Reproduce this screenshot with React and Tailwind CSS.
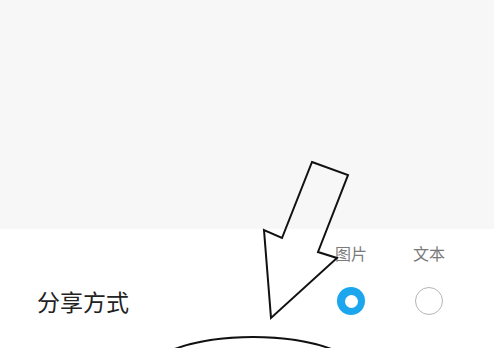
import React from "react";

const font = { fontFamily: '"Noto Sans CJK SC", "Noto Sans", sans-serif' };

const Option = ({ label, checked }) => (
  <div className="flex w-[32px] flex-col items-center gap-[26px]">
    <span className="text-[16px] leading-[16px] text-[#7a7a7a]">{label}</span>
    {checked ? (
      <span className="flex h-[28px] w-[28px] items-center justify-center rounded-full bg-[#1ba6ee]">
        <span className="h-[13px] w-[13px] rounded-full bg-white" />
      </span>
    ) : (
      <span className="h-[28px] w-[28px] rounded-full border border-[#b5b5b5] bg-white" />
    )}
  </div>
);

export default function App() {
  return (
    <div className="relative h-[348px] w-[494px] overflow-hidden bg-white" style={font}>
      <div className="h-[229px] bg-[#f7f7f7]" />
      <div className="flex justify-between pl-[37px] pr-[49px]">
        <div className="pt-[61px] text-[23px] leading-[23px] text-[#222]">分享方式</div>
        <div className="flex gap-[46px] pt-[16px]">
          <Option label="图片" checked />
          <Option label="文本" />
        </div>
      </div>

      {/* hand-drawn annotation */}
      <svg
        className="pointer-events-none absolute left-0 top-0"
        width="494"
        height="348"
        viewBox="0 0 494 348"
      >
        <polygon
          points="312,162 348,175 318,252 337,258 271,318 264,230 282,238"
          fill="none"
          stroke="#111"
          strokeWidth="2"
          strokeLinejoin="miter"
        />
        <ellipse cx="253" cy="379" rx="112" ry="42" fill="none" stroke="#111" strokeWidth="2" />
      </svg>
    </div>
  );
}
